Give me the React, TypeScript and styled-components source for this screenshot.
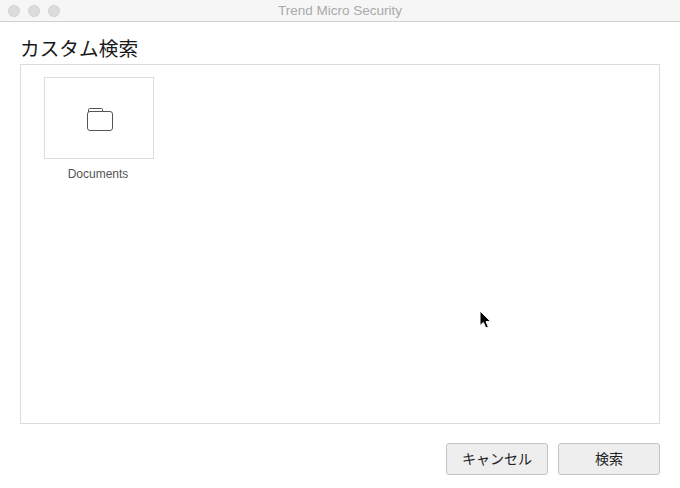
import styled, { createGlobalStyle } from 'styled-components';

const GlobalStyle = createGlobalStyle`
html, body {
    margin: 0;
    padding: 0;
    background: #fff;
}
`

const Window = styled.div`
display: flex;
flex-direction: column;
width: 680px;
height: 488px;
overflow: hidden;
background: #fff;
font-family: "Liberation Sans", "Noto Sans CJK JP", sans-serif;
`

const TitleBar = styled.div`
position: relative;
display: flex;
align-items: center;
justify-content: center;
flex: none;
height: 21px;
background: #f6f6f6;
border-bottom: 1px solid #d1d1d1;
`

const Lights = styled.div`
position: absolute;
left: 8px;
top: 5px;
display: flex;
gap: 8px;
`

const Light = styled.span`
width: 12px;
height: 12px;
border-radius: 50%;
background: #dcdcdc;
border: 0.5px solid #d2d2d2;
box-sizing: border-box;
`

const WindowTitle = styled.div`
font-size: 13.5px;
color: #a9a9a9;
`

const Body = styled.div`
display: flex;
flex-direction: column;
flex: 1;
padding: 0 20px;
`

const Heading = styled.h1`
margin: 0;
height: 42px;
box-sizing: border-box;
padding-top: 15px;
font-size: 19.7px;
font-weight: 400;
line-height: 24px;
color: #1a1a1a;
white-space: nowrap;
`

const ListBox = styled.div`
box-sizing: border-box;
height: 360px;
padding: 12px 23px;
border: 1px solid #dcdcdc;
`

const Item = styled.div`
display: flex;
flex-direction: column;
align-items: center;
width: 110px;
`

const Thumb = styled.div`
display: flex;
align-items: center;
justify-content: center;
box-sizing: border-box;
width: 110px;
height: 82px;
padding: 2px 0 0 2px;
border: 1px solid #dcdcdc;
`

const ItemLabel = styled.div`
margin-top: 8px;
margin-left: -2px;
font-size: 12px;
line-height: 15px;
color: #555;
`

const Footer = styled.div`
display: flex;
justify-content: flex-end;
gap: 10px;
padding-top: 19px;
`

const Button = styled.button`
box-sizing: border-box;
width: 102px;
height: 32px;
padding: 0 0 3px;
background: #eeeeee;
border: 1px solid #c4c4c4;
border-radius: 3px;
font-family: inherit;
font-size: 14px;
color: #222;
`

const Cursor = styled.svg`
position: absolute;
left: 478px;
top: 309px;
`

function FolderIcon(): JSX.Element {
    return (
        <svg width="28" height="26" viewBox="0 0 28 26" fill="none" stroke="#555" strokeWidth="1">
            <path d="M2.5 6 V3.5 Q2.5 2.5 3.5 2.5 H15.5 Q16.5 2.5 16.5 3.5 V5.5" />
            <rect x="1.5" y="5.5" width="25" height="19" rx="2.5" />
        </svg>
    )
}

function App(): JSX.Element {
    return (
        <Window>
            <GlobalStyle />
            <TitleBar>
                <Lights>
                    <Light />
                    <Light />
                    <Light />
                </Lights>
                <WindowTitle>Trend Micro Security</WindowTitle>
            </TitleBar>
            <Body>
                <Heading>カスタム検索</Heading>
                <ListBox>
                    <Item>
                        <Thumb>
                            <FolderIcon />
                        </Thumb>
                        <ItemLabel>Documents</ItemLabel>
                    </Item>
                </ListBox>
                <Footer>
                    <Button>キャンセル</Button>
                    <Button>検索</Button>
                </Footer>
            </Body>
            <Cursor width="16" height="22" viewBox="0 0 16 22">
                <path d="M2 2 L2 16.5 L5.4 13.4 L7.8 19 L10.4 18 L8 12.6 L12.6 12.4 Z" fill="#000" stroke="#fff" strokeWidth="1" />
            </Cursor>
        </Window>
    )
}

export default App;
